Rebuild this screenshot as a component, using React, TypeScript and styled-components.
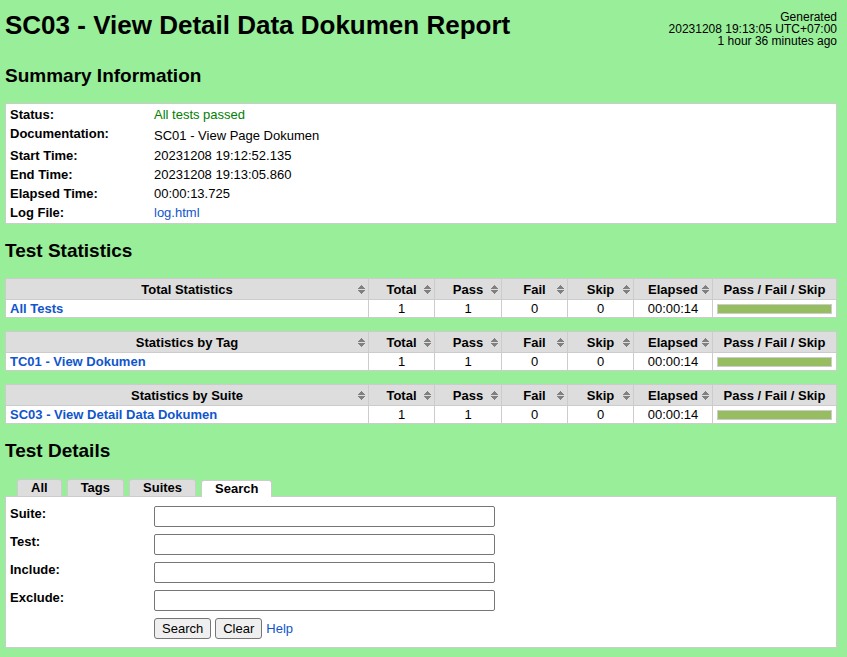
import React, { useState } from "react";
import styled, { createGlobalStyle } from "styled-components";

const GlobalStyle = createGlobalStyle`
  body {
    margin: 0;
    background: #9e9;
    color: #000;
    font-family: "Liberation Sans", Arial, sans-serif;
    font-size: 13px;
    line-height: 15px;
  }
`;

const Page = styled.main`
  padding: 10px 10px 10px 5px;
`;

const Header = styled.header`
  display: flex;
  justify-content: space-between;
  align-items: flex-start;
  padding-bottom: 2px;
`;

const Title = styled.h1`
  margin: 0;
  font-size: 26px;
  line-height: 30px;
`;

const Generated = styled.div`
  padding-top: 1px;
  font-size: 12px;
  line-height: 12px;
  text-align: right;
`;

const Heading = styled.h2`
  margin: 0;
  padding: 16px 0;
  font-size: 19px;
  line-height: 22px;
`;

const Panel = styled.div`
  border: 1px solid #ccc;
  background: #fff;
`;

const Summary = styled(Panel)`
  padding: 1px 0;
`;

const SummaryTable = styled.table`
  width: 100%;
  border-collapse: collapse;

  th,
  td {
    padding: 2px 4px;
    text-align: left;
    vertical-align: top;
    font-weight: normal;
  }
  th {
    width: 136px;
    font-weight: bold;
  }
`;

const DocText = styled.p`
  margin: 2px 0 1px;
`;

const Passed = styled.span`
  color: green;
`;

const Link = styled.a<{ $bold?: boolean }>`
  color: #15c;
  text-decoration: none;
  font-weight: ${(p) => (p.$bold ? "bold" : "normal")};
`;

const StatList = styled.section`
  display: flex;
  flex-direction: column;
  gap: 13px;
`;

const StatTable = styled.table`
  width: 100%;
  table-layout: fixed;
  border-collapse: collapse;
  background: #fff;

  th,
  td {
    border: 1px solid #ccc;
    padding: 1px 4px;
    text-align: center;
  }
  th {
    height: 18px;
    padding: 1px 2px;
    background: #ddd;
  }
  td:first-child {
    text-align: left;
  }
`;

const Col = styled.col<{ $width?: number }>`
  width: ${(p) => (p.$width ? `${p.$width}px` : "auto")};
`;

const SortButton = styled.button`
  display: grid;
  grid-template-columns: 1fr auto 1fr;
  align-items: center;
  width: 100%;
  padding: 0;
  border: 0;
  background: none;
  color: inherit;
  font: inherit;
  cursor: pointer;

  span {
    grid-column: 2;
  }
  svg {
    justify-self: end;
    display: block;
  }
`;

const Graph = styled.div`
  display: flex;
  height: 8px;
  border: 1px solid #ccc;
`;

const Bar = styled.div`
  background: #97bd61;
`;

const Tabs = styled.div`
  display: flex;
  align-items: flex-end;
  gap: 5px;
  height: 18px;
  padding-left: 12px;
`;

const Tab = styled.button<{ $active: boolean }>`
  height: 17px;
  margin-bottom: ${(p) => (p.$active ? -1 : 0)}px;
  padding: 0 13px;
  border: 1px solid #ccc;
  border-bottom: 0;
  border-radius: 3px 3px 0 0;
  background: ${(p) => (p.$active ? "#fff" : "#ddd")};
  color: #000;
  font: bold 13px/16px "Liberation Sans", Arial, sans-serif;
  z-index: 1;
  cursor: pointer;
`;

const SearchForm = styled.form`
  display: flex;
  flex-direction: column;
  gap: 7px;
  padding: 9px 4px 8px;
`;

const Field = styled.div`
  display: grid;
  grid-template-columns: 144px 1fr;
  align-items: start;
`;

const Label = styled.label`
  font-weight: bold;
`;

const TextInput = styled.input`
  box-sizing: border-box;
  width: 100%;
  max-width: 341px;
  height: 21px;
  margin: 0;
  padding: 1px 2px;
  border: 1px solid #767676;
  border-radius: 2px;
  background: #fff;
  font: inherit;
`;

const Actions = styled.div`
  grid-column: 2;
  display: flex;
  align-items: center;
  gap: 4px;
`;

const Button = styled.button`
  height: 21px;
  padding: 0 7px;
  border: 1px solid #767676;
  border-radius: 3px;
  background: #efefef;
  color: #000;
  font: inherit;
`;

const SortIcon = () => (
  <svg width="8" height="9" viewBox="0 0 8 9" aria-hidden="true">
    <path d="M3 0h1v1h1v1h1v1h1v1H0V3h1V2h1V1h1zM0 5h7v1H6v1H5v1H4v1H3V8H2V7H1V6H0z" fill="#808080" />
  </svg>
);

const columns = ["Total", "Pass", "Fail", "Skip", "Elapsed"];
const stats = [
  { heading: "Total Statistics", name: "All Tests" },
  { heading: "Statistics by Tag", name: "TC01 - View Dokumen" },
  { heading: "Statistics by Suite", name: "SC03 - View Detail Data Dokumen" },
];

const Statistics = ({ heading, name }: { heading: string; name: string }) => (
  <StatTable>
    <colgroup>
      <Col />
      <Col $width={66} />
      <Col $width={67} />
      <Col $width={66} />
      <Col $width={66} />
      <Col $width={79} />
      <Col $width={124} />
    </colgroup>
    <thead>
      <tr>
        {[heading, ...columns].map((text) => (
          <th key={text} scope="col">
            <SortButton type="button">
              <span>{text}</span>
              <SortIcon />
            </SortButton>
          </th>
        ))}
        <th scope="col">Pass / Fail / Skip</th>
      </tr>
    </thead>
    <tbody>
      <tr>
        <td>
          <Link $bold href="#details">{name}</Link>
        </td>
        <td>1</td>
        <td>1</td>
        <td>0</td>
        <td>0</td>
        <td>00:00:14</td>
        <td>
          <Graph>
            <Bar style={{ width: "100%" }} />
          </Graph>
        </td>
      </tr>
    </tbody>
  </StatTable>
);

const tabs = ["All", "Tags", "Suites", "Search"];
const fields = ["Suite", "Test", "Include", "Exclude"];

export default function App() {
  const [active, setActive] = useState("Search");
  return (
    <>
      <GlobalStyle />
      <Page>
        <Header>
          <Title>SC03 - View Detail Data Dokumen Report</Title>
          <Generated>
            Generated
            <br />
            20231208 19:13:05 UTC+07:00
            <br />1 hour 36 minutes ago
          </Generated>
        </Header>

        <Heading>Summary Information</Heading>
        <Summary>
          <SummaryTable>
            <tbody>
              <tr>
                <th scope="row">Status:</th>
                <td><Passed>All tests passed</Passed></td>
              </tr>
              <tr>
                <th scope="row">Documentation:</th>
                <td><DocText>SC01 - View Page Dokumen</DocText></td>
              </tr>
              <tr>
                <th scope="row">Start Time:</th>
                <td>20231208 19:12:52.135</td>
              </tr>
              <tr>
                <th scope="row">End Time:</th>
                <td>20231208 19:13:05.860</td>
              </tr>
              <tr>
                <th scope="row">Elapsed Time:</th>
                <td>00:00:13.725</td>
              </tr>
              <tr>
                <th scope="row">Log File:</th>
                <td><Link href="#log">log.html</Link></td>
              </tr>
            </tbody>
          </SummaryTable>
        </Summary>

        <Heading>Test Statistics</Heading>
        <StatList>
          {stats.map((s) => (
            <Statistics key={s.heading} {...s} />
          ))}
        </StatList>

        <Heading id="details">Test Details</Heading>
        <Tabs role="tablist">
          {tabs.map((t) => (
            <Tab
              key={t}
              type="button"
              role="tab"
              aria-selected={t === active}
              $active={t === active}
              onClick={() => setActive(t)}
            >
              {t}
            </Tab>
          ))}
        </Tabs>
        <Panel>
          <SearchForm onSubmit={(e) => e.preventDefault()}>
            {fields.map((f) => (
              <Field key={f}>
                <Label htmlFor={f}>{f}:</Label>
                <TextInput id={f} type="text" />
              </Field>
            ))}
            <Field>
              <Actions>
                <Button type="submit">Search</Button>
                <Button type="reset">Clear</Button>
                <Link href="#help">Help</Link>
              </Actions>
            </Field>
          </SearchForm>
        </Panel>
      </Page>
    </>
  );
}
